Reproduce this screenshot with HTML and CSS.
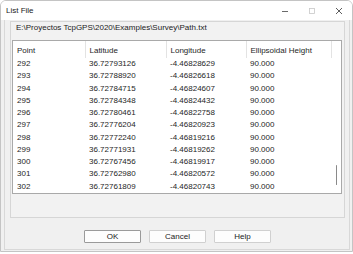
FILE: index.html
```
<!DOCTYPE html>
<html>
<head>
	<title>List File</title>
	<link rel="stylesheet" href="styles.css">
</head>
<body>
	<div class="window">
		<div class="titlebar">
			<span class="title">List File</span>
			<div class="caption">
				<span class="capbtn">
					<svg width="8" height="8" viewBox="0 0 8 8"><line x1="1" y1="4.5" x2="7" y2="4.5" stroke="#444" stroke-width="0.8"/></svg>
				</span>
				<span class="capbtn">
					<svg width="8" height="8" viewBox="0 0 8 8"><rect x="1.5" y="1.5" width="5" height="5" fill="none" stroke="#c8c8c8" stroke-width="0.8"/></svg>
				</span>
				<span class="capbtn">
					<svg width="8" height="8" viewBox="0 0 8 8"><path d="M1 1 L7 7 M7 1 L1 7" stroke="#333" stroke-width="0.8"/></svg>
				</span>
			</div>
		</div>
		<div class="client">
			<div class="frame">
				<div class="panel">
					<div class="path">E:\Proyectos TcpGPS\2020\Examples\Survey\Path.txt</div>
					<div class="list">
						<table class="grid">
							<colgroup>
								<col class="c-point">
								<col class="c-lat">
								<col class="c-lon">
								<col class="c-h">
							</colgroup>
							<thead>
								<tr>
									<th>Point</th>
									<th>Latitude</th>
									<th>Longitude</th>
									<th>Ellipsoidal Height</th>
								</tr>
							</thead>
							<tbody>
								<tr><td>292</td><td>36.72793126</td><td>-4.46828629</td><td>90.000</td></tr>
								<tr><td>293</td><td>36.72788920</td><td>-4.46826618</td><td>90.000</td></tr>
								<tr><td>294</td><td>36.72784715</td><td>-4.46824607</td><td>90.000</td></tr>
								<tr><td>295</td><td>36.72784348</td><td>-4.46824432</td><td>90.000</td></tr>
								<tr><td>296</td><td>36.72780461</td><td>-4.46822758</td><td>90.000</td></tr>
								<tr><td>297</td><td>36.72776204</td><td>-4.46820923</td><td>90.000</td></tr>
								<tr><td>298</td><td>36.72772240</td><td>-4.46819216</td><td>90.000</td></tr>
								<tr><td>299</td><td>36.72771931</td><td>-4.46819262</td><td>90.000</td></tr>
								<tr><td>300</td><td>36.72767456</td><td>-4.46819917</td><td>90.000</td></tr>
								<tr><td>301</td><td>36.72762980</td><td>-4.46820572</td><td>90.000</td></tr>
								<tr><td>302</td><td>36.72761809</td><td>-4.46820743</td><td>90.000</td></tr>
							</tbody>
						</table>
						<div class="scrollbar"><div class="thumb"></div></div>
					</div>
				</div>
				<div class="buttons">
					<button class="btn default">OK</button>
					<button class="btn">Cancel</button>
					<button class="btn">Help</button>
				</div>
			</div>
		</div>
	</div>
</body>
</html>
```

FILE: styles.css
```
body {
	margin: 0;
	background: #ffffff;
	font-family: "Liberation Sans", Arial, sans-serif;
	font-size: 8px;
	color: #1a1a1a;
}

.window {
	box-sizing: border-box;
	width: 353px;
	height: 252px;
	border: 1px solid #c4c4c4;
	border-radius: 6px 6px 0 0;
	display: flex;
	flex-direction: column;
	overflow: hidden;
}

.titlebar {
	height: 19px;
	background: #ffffff;
	display: flex;
	align-items: center;
	justify-content: space-between;
}

.title {
	padding-left: 5px;
	color: #222;
}

.caption {
	display: flex;
	height: 19px;
}

.capbtn {
	width: 27px;
	display: flex;
	align-items: center;
	justify-content: center;
}

.client {
	flex: 1;
	background: #f0f0f0;
	display: flex;
	flex-direction: column;
}

.frame {
	flex: 1;
	margin: 0 2px 1px 3px;
	padding: 1px 4px 5px 5px;
	border: 1px solid #d8d8d8;
	border-top: none;
	display: flex;
	flex-direction: column;
}

.panel {
	border: 1px solid #d6d6d6;
	background: #f2f2f2;
	padding: 0 2px 23px 1px;
}

.path {
	height: 11px;
	line-height: 11px;
	padding-left: 4px;
	margin-bottom: 7px;
	font-size: 8px;
	color: #222;
}

.list {
	height: 154px;
	box-sizing: border-box;
	border: 1px solid #a9a9a9;
	background: #ffffff;
	display: flex;
}

.grid {
	border-collapse: collapse;
	table-layout: fixed;
	width: 318px;
	font-size: 8px;
	color: #262626;
}

.c-point { width: 72px; }
.c-lat { width: 81px; }
.c-lon { width: 80px; }
.c-h { width: 85px; }

.grid th {
	height: 17px;
	padding: 3px 0 0 4px;
	box-sizing: border-box;
	text-align: left;
	font-weight: normal;
	line-height: 12px;
	border-right: 1px solid #e3e3e3;
	white-space: nowrap;
}

.grid td {
	height: 12.2px;
	padding: 0 0 0 4px;
	line-height: 12.2px;
	white-space: nowrap;
}

.scrollbar {
	flex: 1;
	display: flex;
	flex-direction: column;
	align-items: center;
}

.thumb {
	margin-top: 124px;
	width: 1.5px;
	height: 20px;
	background: #8a8a8a;
	border-radius: 1px;
}

.buttons {
	margin-top: 12px;
	display: flex;
	justify-content: center;
	gap: 8px;
}

.btn {
	width: 57px;
	height: 13px;
	padding: 0;
	font-family: "Liberation Sans", Arial, sans-serif;
	font-size: 8px;
	line-height: 11px;
	color: #222;
	background: #fdfdfd;
	border: 1px solid #d0d0d0;
	border-radius: 1px;
}

.btn.default {
	border: 1px solid #9a9a9a;
}
```
